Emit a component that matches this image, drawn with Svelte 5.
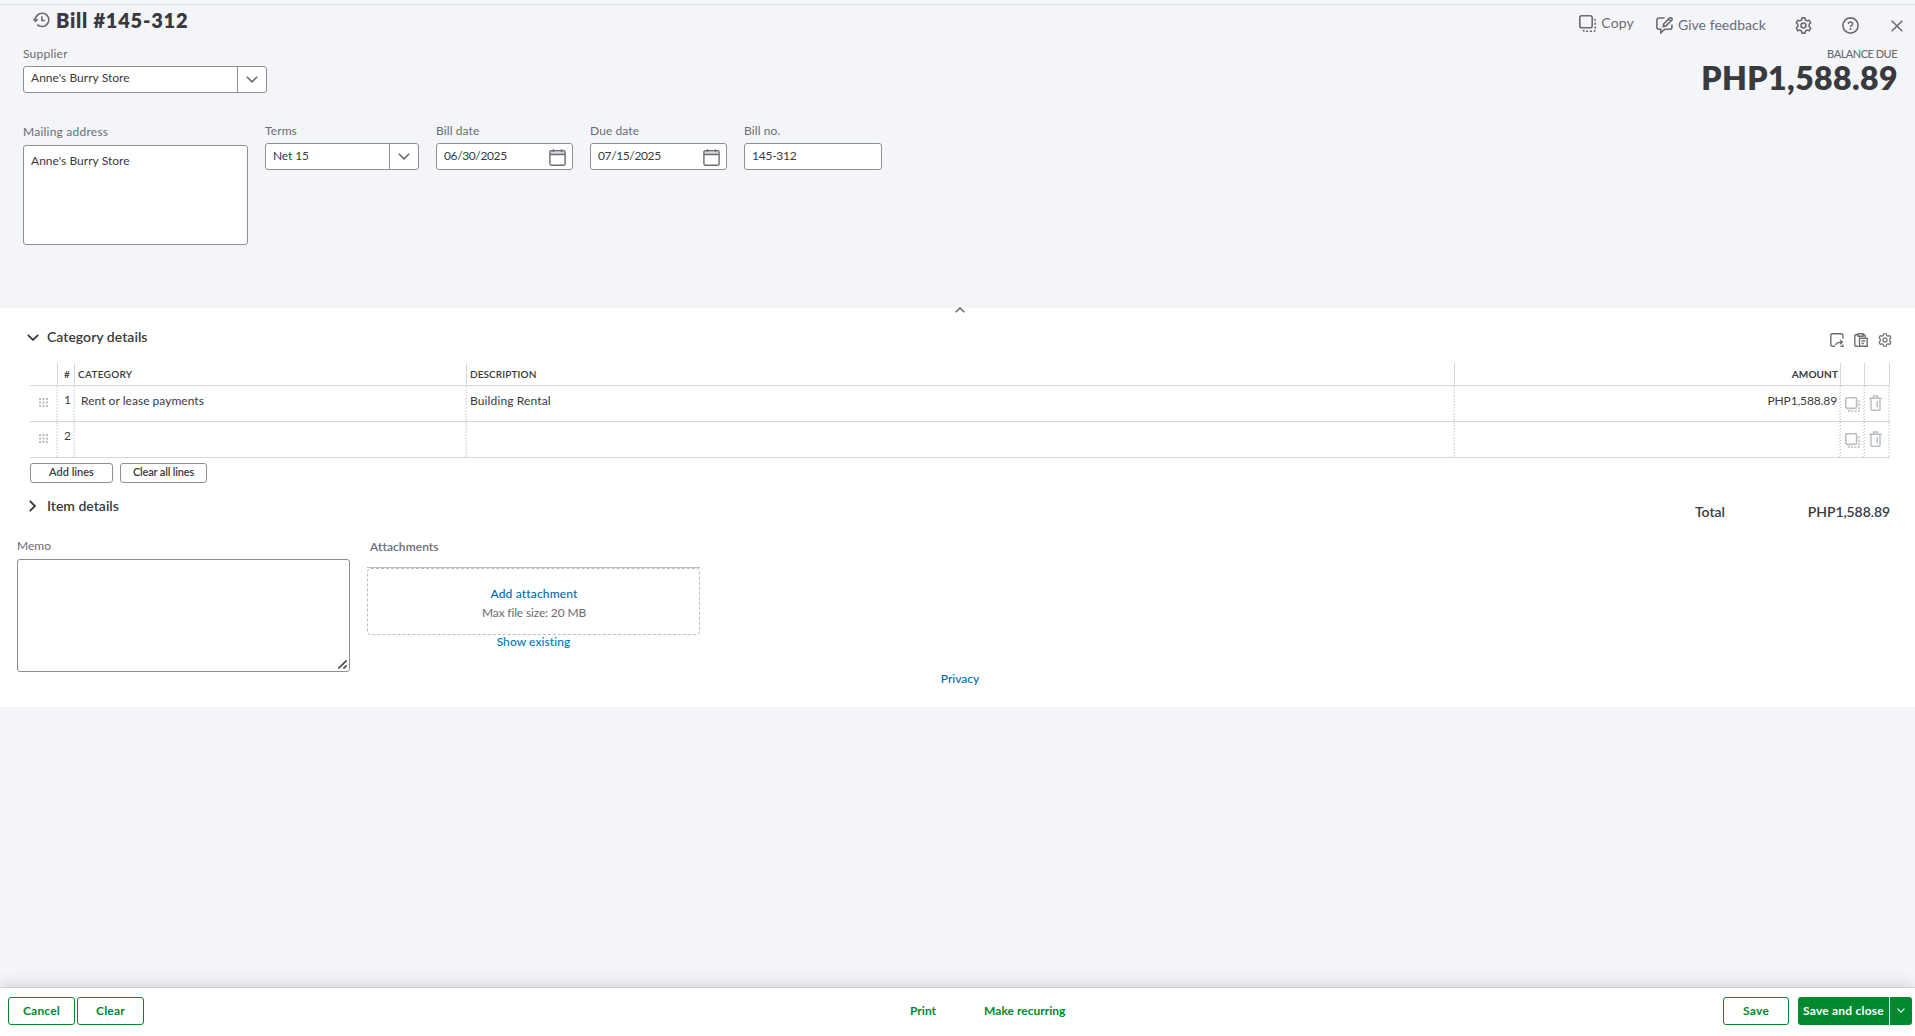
<script>
  const columns = [
    { key: 'grip', label: '' },
    { key: 'num', label: '#' },
    { key: 'category', label: 'CATEGORY' },
    { key: 'description', label: 'DESCRIPTION' },
    { key: 'amount', label: 'AMOUNT' },
    { key: 'dup', label: '' },
    { key: 'trash', label: '' }
  ];

  const lines = [
    { num: '1', category: 'Rent or lease payments', description: 'Building Rental', amount: 'PHP1,588.89' },
    { num: '2', category: '', description: '', amount: '' }
  ];

  const dots = [1, 4.5, 8];
</script>

{#snippet chevron()}
  <svg class="chev" viewBox="0 0 12 7" aria-hidden="true"><path d="M.8.8 6 5.900 11.200.8" /></svg>
{/snippet}

{#snippet copyIcon()}
  <svg class="icon" viewBox="0 0 17 17" aria-hidden="true">
    <rect x=".8" y=".8" width="12.400" height="12" rx="1.800" />
    <path d="M15 4.200c.8.2 1.200.8 1.200 1.600M16.200 7.400v2.400M16.200 11.600v2.200M16.200 15.200c-.2.7-.6 1-1.400 1M13 16.200h-2.200M9.200 16.200H7M5.600 16.200c-.9 0-1.400-.6-1.400-1.500" />
  </svg>
{/snippet}

{#snippet gearIcon()}
  <svg class="icon" viewBox="0 0 17 17" aria-hidden="true">
    <path stroke-linejoin="round" d="M7 .9h3l.5 2.100 1.600.9 2.100-.7 1.500 2.600-1.500 1.500v2.400l1.500 1.500-1.500 2.600-2.100-.7-1.600.9-.5 2.100H7L6.500 14l-1.600-.9-2.100.7-1.500-2.600 1.500-1.500V7.300L1.300 5.800l1.500-2.600 2.100.7L6.500 3z" />
    <circle cx="8.500" cy="8.500" r="2.500" />
  </svg>
{/snippet}

{#snippet calendar()}
  <svg class="cal" viewBox="0 0 17 17" aria-hidden="true">
    <path class="band" d="M1 2h15v3.500H1z" />
    <rect x=".9" y="1.600" width="15.200" height="14.600" rx="1.400" />
    <path d="M1 5.500h15M4.500.3v2.600M12.500.3v2.600" />
  </svg>
{/snippet}

<div class="page">
  <div class="strip"></div>
  <header class="top">
    <div class="left">
      <div class="title">
        <svg class="icon history" viewBox="0 0 18 17" aria-hidden="true">
          <path d="M2.600 9.500A7.100 7.100 0 1 1 4.500 13.300M4.800 13.700a7.100 7.100 0 0 0 2 1.300M.6 7.500l2 2.300 2.300-1.900M9.400 4.500v4.600h3.200" />
        </svg>
        <h1>Bill #145-312</h1>
      </div>
      <span class="label wide">Supplier</span>
      <div class="select supplier">
        <span class="value">Anne's Burry Store</span>
        <span class="arrow">{@render chevron()}</span>
      </div>
      <div class="fields">
        <div class="field mailing">
          <span class="label wide">Mailing address</span>
          <div class="address">Anne's Burry Store</div>
        </div>
        <div class="field terms">
          <span class="label">Terms</span>
          <div class="select">
            <span class="value tight">Net 15</span>
            <span class="arrow">{@render chevron()}</span>
          </div>
        </div>
        <div class="field">
          <span class="label">Bill date</span>
          <div class="input"><span class="date">06/30/2025</span>{@render calendar()}</div>
        </div>
        <div class="field">
          <span class="label">Due date</span>
          <div class="input"><span class="date">07/15/2025</span>{@render calendar()}</div>
        </div>
        <div class="field billno">
          <span class="label">Bill no.</span>
          <div class="input"><span class="number">145-312</span></div>
        </div>
      </div>
    </div>
    <div class="right">
      <div class="actions">
        <span class="action copy">{@render copyIcon()}<span>Copy</span></span>
        <span class="action feedback">
          <svg class="icon" viewBox="0 0 17 17" aria-hidden="true">
            <path d="M8.500 1H3C1.700 1 .9 1.800.9 3v7.200c0 1.200.8 2 2.100 2h1.800v3.600l4-3.600h5c1.300 0 2.100-.8 2.100-2V7.500M7.200 9.400l.5-2.500 6-6c1-.9 3.100.9 2.200 2.200l-6 5.800zM12.500 2.200l2.200 2.200" />
          </svg>
          <span>Give feedback</span>
        </span>
        <span class="action gear">{@render gearIcon()}</span>
        <span class="action help">
          <svg class="icon" viewBox="0 0 17 17" aria-hidden="true">
            <circle cx="8.500" cy="8.500" r="7.600" />
            <path class="q" d="M6.400 6.900c0-2.700 4.200-2.700 4.200 0 0 1.500-2.100 1.500-2.100 3" />
            <circle class="dot" cx="8.500" cy="12" r="1" />
          </svg>
        </span>
        <span class="action close">
          <svg class="icon" viewBox="0 0 12 12" aria-hidden="true"><path d="M.7.7l10.600 10.600M11.300.7.7 11.300" /></svg>
        </span>
      </div>
      <span class="due">BALANCE DUE</span>
      <span class="balance">PHP1,588.89</span>
    </div>
  </header>

  <main>
    <div class="collapse"><svg viewBox="0 0 10 6" aria-hidden="true"><path d="M.7 5.300 5 1l4.300 4.300" /></svg></div>
    <div class="section-head">
      <div class="heading">{@render chevron()}<h2>Category details</h2></div>
      <div class="tools">
        <svg class="icon" viewBox="0 0 14 14" aria-hidden="true">
          <path d="M5 13.200H2.200c-1 0-1.400-.5-1.400-1.400V2.200C.8 1.300 1.200.8 2.200.8h9.300c1 0 1.400.5 1.400 1.400v3.600M5.800 12.200c.2-2.300 2-3.100 6.200-3.100M10 6.900l2.400 2.200L10 11.300M12.900 11.600v1.600h-2.400" />
        </svg>
        <svg class="icon" viewBox="0 0 14 14" aria-hidden="true">
          <path d="M4 1.800H2c-.8 0-1.200.4-1.200 1.200v9c0 .8.4 1.200 1.200 1.200h2.300M9 1.800h1c.8 0 1.200.4 1.200 1.200v1.200M4 .8h5v2.400H4zM5.500 5.200h7.700v8.100H5.500zM7.500 8h3.800M7.500 10.500h2.300" />
        </svg>
        {@render gearIcon()}
      </div>
    </div>

    <div class="table">
      {#each columns as col}
        <div class="th {col.key}">{col.label}</div>
      {/each}
      {#each lines as line}
        {#each columns as col}
          <div class="td {col.key}">
            {#if col.key === 'grip'}
              <svg class="dots" viewBox="0 0 9 9" aria-hidden="true">
                {#each dots as y}{#each dots as x}<rect x={x - 1} y={y - 1} width="2" height="2" />{/each}{/each}
              </svg>
            {:else if col.key === 'dup'}
              {@render copyIcon()}
            {:else if col.key === 'trash'}
              <svg class="icon" viewBox="0 0 13 16" aria-hidden="true">
                <path d="M.2 3.300h12.600M4.500 3V.9h4V3M2 3.500v10.700c0 .7.4 1.100 1.100 1.100h6.800c.7 0 1.100-.4 1.100-1.100V3.500M8.300 6v6.500" />
              </svg>
            {:else}
              {line[col.key]}
            {/if}
          </div>
        {/each}
      {/each}
    </div>

    <div class="line-buttons">
      <button class="add">Add lines</button>
      <button class="clear-all">Clear all lines</button>
    </div>

    <div class="item-row">
      <div class="heading closed">
        <svg viewBox="0 0 7 12" aria-hidden="true"><path d="M.8.8 5.900 6 .8 11.200" /></svg>
        <h2>Item details</h2>
      </div>
      <div class="total"><span>Total</span><span class="sum">PHP1,588.89</span></div>
    </div>

    <div class="extras">
      <div class="memo">
        <span class="label">Memo</span>
        <div class="memo-box">
          <svg viewBox="0 0 9 9" aria-hidden="true"><path d="M.4 8.600 8.600.4M5.400 8.600l3.200-3.200" /></svg>
        </div>
      </div>
      <div class="attachments">
        <span class="att-label">Attachments</span>
        <div class="drop-wrap">
          <div class="drop">
            <span class="add-att">Add attachment</span>
            <span class="max">Max file size: 20 MB</span>
          </div>
        </div>
        <span class="show">Show existing</span>
      </div>
    </div>
    <div class="privacy">Privacy</div>
  </main>

  <div class="filler"></div>

  <footer>
    <div class="f-left">
      <button class="outline">Cancel</button>
      <button class="outline">Clear</button>
    </div>
    <div class="f-mid"><span>Print</span><span>Make recurring</span></div>
    <div class="f-right">
      <button class="outline save">Save</button>
      <div class="split">
        <button class="solid">Save and close</button>
        <button class="solid more" aria-label="More save options">
          <svg viewBox="0 0 8 5" aria-hidden="true"><path d="M.5.6 4 4.100 7.500.6" /></svg>
        </button>
      </div>
    </div>
  </footer>
</div>

<style>
  :global(body) { margin: 0; }
  .page, .page :global(*) { box-sizing: border-box; }
  .page {
    width: 100%;
    height: 100vh;
    min-height: 1036px;
    display: flex;
    flex-direction: column;
    background: #f3f5f9;
    color: #393a3d;
    font: 400 12px/16px Lato, "Open Sans", sans-serif;
    overflow: hidden;
  }
  h1, h2 { margin: 0; }
  svg { display: block; flex: none; fill: none; stroke: currentColor; stroke-width: 1.6; }
  button {
    font: inherit;
    margin: 0;
    padding: 0;
    color: inherit;
    background: #fff;
    display: flex;
    align-items: center;
    justify-content: center;
  }
  .strip { height: 5px; background: #f4fafc; border-bottom: 1px solid #d5e3e7; flex: none; }

  .top { height: 303px; display: flex; justify-content: space-between; flex: none; }
  .left { padding-left: 23px; display: flex; flex-direction: column; align-items: flex-start; }
  .title { height: 41px; display: flex; padding: 3px 0 0 10px; gap: 6px; }
  .history { width: 17px; height: 16px; color: #6b6c72; margin-top: 4px; stroke-width: 1.7; }
  h1 { font-size: 20px; line-height: 24px; font-weight: 800; letter-spacing: .77px; }
  .label { color: #6b6c72; letter-spacing: .1px; }
  .label.wide { letter-spacing: .23px; }
  .select, .input, .address { border: 1px solid #8d9096; border-radius: 3px; background: #fff; }
  .select { display: flex; height: 27px; width: 100%; margin-top: 4px; }
  .supplier { width: 244px; height: 27px; }
  .value { flex: 1; padding: 4px 0 0 7px; letter-spacing: .03px; }
  .supplier .value { padding-top: 3px; }
  .tight { letter-spacing: -.12px; }
  .arrow { width: 29px; border-left: 1px solid #8d9096; display: flex; align-items: center; justify-content: center; color: #6b6c72; }
  .chev { width: 12px; height: 7px; }
  .fields { display: flex; margin-top: 30px; }
  .field { display: flex; flex-direction: column; width: 137px; margin-right: 17px; }
  .mailing { width: 225px; margin-top: 1px; }
  .terms { width: 154px; }
  .billno { width: 138px; margin: 0; }
  .address { height: 100px; margin-top: 5px; padding: 7px; letter-spacing: .03px; }
  .input { height: 27px; margin-top: 4px; display: flex; justify-content: space-between; padding: 4px 6px 0 7px; }
  .date { letter-spacing: -.38px; }
  .number { letter-spacing: -.25px; }
  .cal { width: 17px; height: 17px; margin-top: 1px; color: #6b6c72; stroke-width: 1.4; }
  .band { fill: #d4d7dc; stroke: none; }

  .right { display: flex; flex-direction: column; align-items: flex-end; color: #6b6c72; }
  .actions { height: 41px; display: flex; align-items: flex-start; font-size: 14px; line-height: 20px; padding: 10px 12px 0 0; }
  .action { display: flex; }
  .action .icon { width: 17px; height: 17px; }
  .copy { gap: 5px; letter-spacing: .15px; margin-right: 22px; }
  .copy span { margin-top: -2px; }
  .feedback { margin-top: 2px; gap: 5px; letter-spacing: .05px; margin-right: 29px; }
  .feedback span { margin-top: -2px; }
  .gear { margin: 2px 30px 0 0; }
  .help { margin: 2px 32px 0 0; }
  .close { margin-top: 5px; }
  .close .icon { width: 12px; height: 12px; }
  .q { stroke-width: 1.5; }
  .dot { fill: currentColor; stroke: none; }
  .due { font-size: 11px; font-weight: 500; letter-spacing: -.5px; margin-right: 18px; line-height: 16px; }
  .balance { font-size: 32px; font-weight: 800; line-height: 38px; letter-spacing: .4px; color: #393a3d; margin: -3px 17px 0 0; }

  main { background: #fff; height: 399px; flex: none; padding: 0 25px 0 30px; }
  .collapse { height: 14px; display: flex; justify-content: center; }
  .collapse svg { width: 10px; height: 6px; color: #6b6c72; margin-top: -1px; }
  .section-head { height: 41px; display: flex; justify-content: space-between; }
  .heading { display: flex; gap: 8px; padding-top: 5px; margin-left: -3px; }
  .heading svg { margin-top: 7px; stroke-width: 1.8; }
  h2 { font-size: 14px; line-height: 20px; font-weight: 600; letter-spacing: .03px; }
  .tools { display: flex; gap: 10px; padding-top: 11px; color: #6b6c72; margin-right: -2px; }
  .tools .icon { width: 14px; height: 14px; stroke-width: 1.4; }
  .tools :global(.icon:last-child) { width: 14px; height: 14px; }

  .table { display: grid; grid-template-columns: 28px 17px 392px 988px 386px 24px 25px; }
  .th { height: 23px; border-right: 1px solid #d4d7dc; border-bottom: 1px solid #d4d7dc; font-size: 10px; font-weight: 600; padding: 3px 3px 0; letter-spacing: .1px; }
  .th.category { letter-spacing: .3px; }
  .th.amount { font-weight: 700; padding-right: 2px; }
  .amount { text-align: right; }
  .th.num { padding-left: 6px; letter-spacing: 0; }
  .td {
    height: 36px;
    border-bottom: 1px solid #d4d7dc;
    padding: 7px 3px 0;
    letter-spacing: .03px;
    background:
      repeating-linear-gradient(#c6c9ce 0 1px, transparent 1px 3px) right 0 top 0 / 1px 100% no-repeat,
      repeating-linear-gradient(transparent 0 1px, #d4d7dc 1px 2px, transparent 2px 3px) right 1px top 0 / 1px 100% no-repeat;
  }
  .td.num { padding: 6px 0 0 6px; }
  .td.category { padding-left: 6px; }
  .td.description { letter-spacing: .13px; }
  .td.amount { letter-spacing: -.12px; padding-right: 4px; }
  .td.grip { padding: 12px 0 0 9px; color: #babec5; }
  .dots { width: 9px; height: 9px; fill: currentColor; stroke: none; }
  .td.dup { padding: 11px 0 0 4px; color: #babec5; }
  .td.dup :global(svg) { width: 15px; height: 15px; stroke-width: 1.9; }
  .td.trash { padding: 9px 0 0 4px; color: #babec5; }
  .td.trash svg { width: 13px; height: 16px; stroke-width: 1.5; }

  .line-buttons { display: flex; gap: 7px; margin-top: 5px; font-size: 11px; font-weight: 600; }
  .line-buttons button { height: 20px; border: 1px solid #8d9096; border-radius: 3px; width: 83px; padding-bottom: 2px; }
  .line-buttons .clear-all { width: 87px; letter-spacing: -.17px; }

  .item-row { height: 52px; display: flex; justify-content: space-between; padding-top: 8px; }
  .closed { gap: 11px; margin-left: -1px; }
  .closed svg { width: 7px; height: 12px; margin-top: 4px; }
  .closed h2 { letter-spacing: 0; }
  .total { display: flex; font-size: 14px; line-height: 20px; font-weight: 600; padding-top: 11px; }
  .sum { width: 165px; text-align: right; letter-spacing: -.08px; }

  .extras { display: flex; gap: 17px; margin-left: -13px; height: 137px; }
  .memo { width: 333px; padding-top: 3px; }
  .memo .label { display: block; letter-spacing: 0; }
  .memo-box { height: 113px; margin-top: 5px; border: 1px solid #8b8f8e; border-radius: 3px; display: flex; justify-content: flex-end; align-items: flex-end; padding: 2px; }
  .memo-box svg { width: 9px; height: 9px; color: #4a4b4d; }
  .attachments { width: 333px; display: flex; flex-direction: column; padding-top: 4px; }
  .att-label { color: #6b6c72; font-weight: 600; padding-left: 3px; letter-spacing: .08px; }
  .drop-wrap { margin-top: 12px; border-top: 1px solid #babec5; }
  .drop { height: 67px; border: 1px dashed #babec5; border-radius: 4px; display: flex; flex-direction: column; align-items: center; padding: 16px 0 0 1px; }
  .add-att { color: #0069b0; font-weight: 500; letter-spacing: .15px; line-height: 18px; }
  .max { color: #6b6c72; letter-spacing: -.15px; line-height: 20px; }
  .show { align-self: center; color: #0077c5; font-weight: 500; letter-spacing: .07px; line-height: 14px; }
  .privacy { text-align: center; line-height: 14px; color: #0069b0; font-weight: 500; }

  .filler { flex: 1; }
  footer {
    height: 49px;
    flex: none;
    border-top: 1px solid #d0d2d8;
    background: #fff;
    box-shadow: 0 -2px 16px rgba(0, 0, 0, .14);
    display: grid;
    grid-template-columns: 902px 1fr auto;
    padding: 9px 3px 0 8px;
    font-weight: 700;
    color: #00892e;
  }
  .f-left { display: flex; gap: 2px; }
  .outline { width: 67px; height: 28px; border: 1px solid #00892e; border-radius: 3px; letter-spacing: .2px; padding-bottom: 1px; }
  .f-mid { display: flex; gap: 48px; padding-top: 6px; letter-spacing: .02px; }
  .f-right { display: flex; gap: 9px; }
  .save { width: 66px; letter-spacing: .3px; }
  .split { display: flex; gap: 1px; }
  .solid { background: #00892e; color: #fff; border: 0; width: 91px; height: 28px; border-radius: 3px 0 0 3px; letter-spacing: .22px; padding-bottom: 1px; }
  .more { width: 22px; border-radius: 0 3px 3px 0; }
  .more svg { width: 8px; height: 5px; stroke-width: 1.2; }
</style>
